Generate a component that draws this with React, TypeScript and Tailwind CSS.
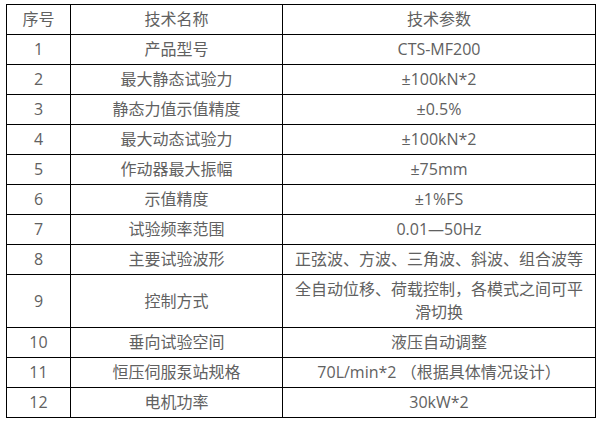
const rows: [string, string, string][] = [
  ["1", "产品型号", "CTS-MF200"],
  ["2", "最大静态试验力", "±100kN*2"],
  ["3", "静态力值示值精度", "±0.5%"],
  ["4", "最大动态试验力", "±100kN*2"],
  ["5", "作动器最大振幅", "±75mm"],
  ["6", "示值精度", "±1%FS"],
  ["7", "试验频率范围", "0.01—50Hz"],
  ["8", "主要试验波形", "正弦波、方波、三角波、斜波、组合波等"],
  ["9", "控制方式", "全自动位移、荷载控制，各模式之间可平滑切换"],
  ["10", "垂向试验空间", "液压自动调整"],
  ["11", "恒压伺服泵站规格", "70L/min*2 （根据具体情况设计）"],
  ["12", "电机功率", "30kW*2"],
];

const cell = "border border-black px-[8px] py-[3px] text-center align-middle leading-[23px]";

export default function App() {
  return (
    <div className="w-[598px] h-[421px] bg-white pl-[6px] pt-[4px] text-[16px] text-[#616161] font-['Open_Sans','Noto_Sans_CJK_SC',sans-serif]">
      <table className="table-fixed border-collapse w-[589px]">
        <colgroup>
          <col className="w-[64px]" />
          <col className="w-[212px]" />
          <col className="w-[313px]" />
        </colgroup>
        <thead>
          <tr>
            <th className={cell + " font-normal"}>序号</th>
            <th className={cell + " font-normal"}>技术名称</th>
            <th className={cell + " font-normal"}>技术参数</th>
          </tr>
        </thead>
        <tbody>
          {rows.map((row) => (
            <tr key={row[0]}>
              <td className={cell}>{row[0]}</td>
              <td className={cell}>{row[1]}</td>
              <td className={cell}>{row[2]}</td>
            </tr>
          ))}
        </tbody>
      </table>
    </div>
  );
}
